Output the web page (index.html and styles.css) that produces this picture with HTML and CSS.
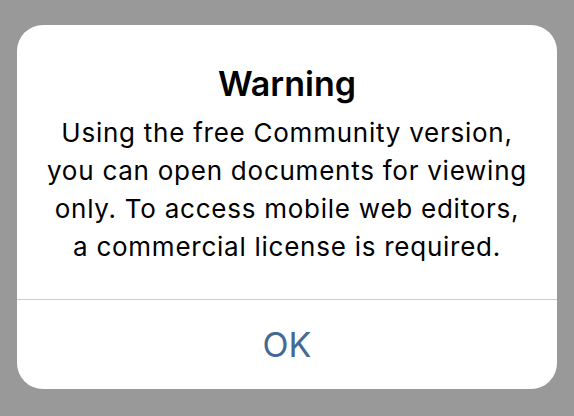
FILE: index.html
```html
<!DOCTYPE html>
<html lang="en">
<head>
    <meta charset="UTF-8">
    <meta name="viewport" content="width=device-width, initial-scale=1.0">
    <title>Warning</title>
    <link rel="stylesheet" href="styles.css">
</head>
<body>
    <div class="alert">
        <div class="alert-content">
            <h2 class="alert-title">Warning</h2>
            <p class="alert-text">Using the free Community version,<br>you can open documents for viewing<br>only. To access mobile web editors,<br>a commercial license is required.</p>
        </div>
        <div class="alert-buttons">
            <button type="button" class="alert-button">OK</button>
        </div>
    </div>
</body>
</html>
```

FILE: styles.css
```css
html, body {
    height: 100%;
}

body {
    margin: 0;
    padding: 25px 17px 0;
    box-sizing: border-box;
    background-color: #999999;
    font-family: Inter, "Noto Sans", sans-serif;
}

.alert {
    width: 540px;
    height: 364px;
    background-color: #fff;
    border-radius: 26px;
    display: flex;
    flex-direction: column;
    overflow: hidden;
}

.alert-content {
    height: 275px;
    box-sizing: border-box;
    padding: 38px 10px 0;
    border-bottom: 1px solid #cccccc;
    text-align: center;
}

.alert-title {
    margin: 0 0 10px;
    font-size: 34px;
    line-height: 41px;
    font-weight: 600;
    color: #000;
}

.alert-text {
    margin: 0;
    font-size: 26px;
    line-height: 38px;
    letter-spacing: 0.75px;
    color: #000;
}

.alert-buttons {
    flex: 1;
    display: flex;
}

.alert-button {
    flex: 1;
    border: none;
    background: none;
    font-family: inherit;
    font-size: 34px;
    color: #446995;
    cursor: pointer;
}
```
